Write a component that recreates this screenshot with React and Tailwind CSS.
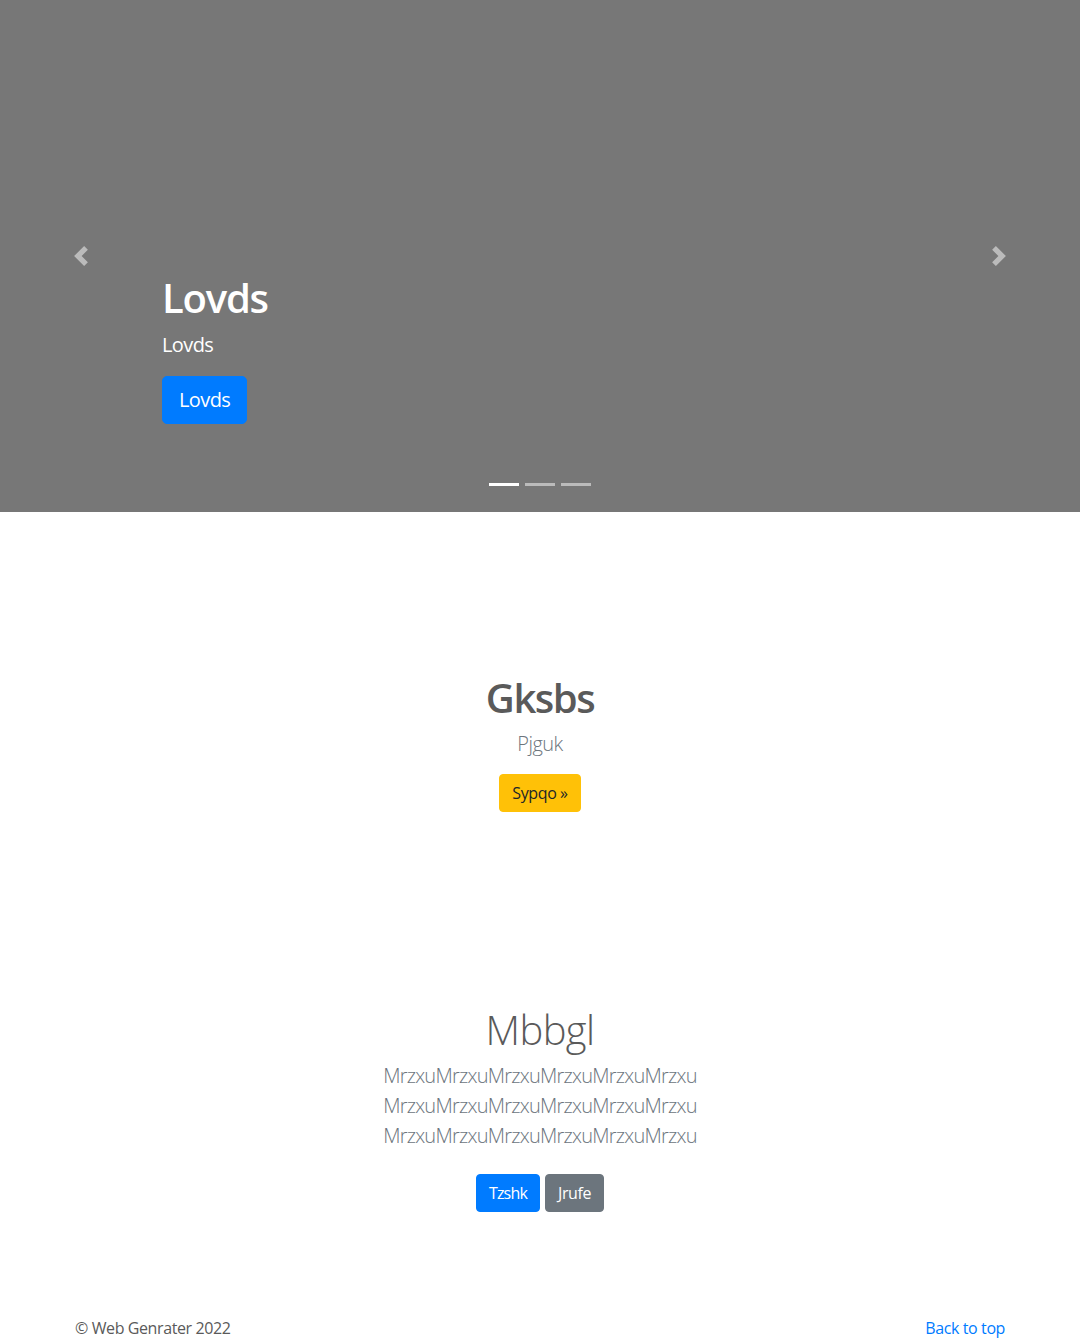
import React from 'react';

const Chevron = ({ dir }) => (
  <svg width="20" height="20" viewBox="0 0 8 8" className="opacity-50" fill="#fff">
    {dir === 'prev' ? (
      <path d="M5.25 0l-4 4 4 4 1.5-1.5L4.25 4l2.5-2.5L5.25 0z" />
    ) : (
      <path d="M2.75 0l-1.5 1.5L3.75 4l-2.5 2.5L2.75 8l4-4-4-4z" />
    )}
  </svg>
);

const Carousel = () => (
  <div className="relative h-[512px] bg-[#777] flex flex-col justify-end pl-[162px] pb-[88px]">
    {/* Стрелки */}
    <div className="absolute left-0 inset-y-0 w-[15%] flex items-center justify-center">
      <Chevron dir="prev" />
    </div>
    <div className="absolute right-0 inset-y-0 w-[15%] flex items-center justify-center">
      <Chevron dir="next" />
    </div>

    {/* Подпись слайда */}
    <h1 className="text-[40px] leading-[48px] font-semibold text-white mb-2 tracking-[-1.2px]">Lovds</h1>
    <p className="text-[20px] leading-[30px] text-white mb-4 tracking-[-0.6px]">Lovds</p>
    <div>
      <a className="inline-block bg-[#007bff] text-white text-[20px] leading-[30px] px-4 py-2 border border-[#007bff] rounded-[5px] tracking-[-0.6px]">
        Lovds
      </a>
    </div>

    {/* Индикаторы */}
    <div className="absolute bottom-[26px] left-0 right-0 flex justify-center gap-[6px]">
      <span className="w-[30px] h-[3px] bg-white" />
      <span className="w-[30px] h-[3px] bg-white/50" />
      <span className="w-[30px] h-[3px] bg-white/50" />
    </div>
  </div>
);

export default function App() {
  return (
    <div className="bg-white text-[#5a5a5a] font-['Open_Sans',sans-serif] text-base tracking-[-0.4px]">
      <Carousel />

      <section className="pt-[162px] flex flex-col items-center text-center">
        <h2 className="text-[40px] leading-[48px] font-semibold mb-[7px] tracking-[-1.5px]">Gksbs</h2>
        <p className="text-[20px] leading-[30px] font-light text-[#6c757d] mb-[15px] tracking-[-0.5px]">Pjguk</p>
        <a className="inline-block bg-[#ffc107] border border-[#ffc107] text-[#212529] text-base leading-6 px-3 py-[6px] rounded">
          Sypqo &raquo;
        </a>
      </section>

      <section className="pt-[194px] flex flex-col items-center text-center">
        <h2 className="text-[40px] leading-[48px] font-light mb-[7px] tracking-[-0.6px]">Mbbgl</h2>
        <p className="text-[20px] leading-[30px] font-light text-[#6c757d] mb-[23px] tracking-[-0.75px]">
          <span className="block">MrzxuMrzxuMrzxuMrzxuMrzxuMrzxu</span>
          <span className="block">MrzxuMrzxuMrzxuMrzxuMrzxuMrzxu</span>
          <span className="block">MrzxuMrzxuMrzxuMrzxuMrzxuMrzxu</span>
        </p>
        <div className="flex gap-[5px]">
          <a className="inline-block bg-[#007bff] border border-[#007bff] text-white text-base leading-6 px-3 py-[6px] rounded tracking-[-0.8px]">
            Tzshk
          </a>
          <a className="inline-block bg-[#6c757d] border border-[#6c757d] text-white text-base leading-6 px-3 py-[6px] rounded">
            Jrufe
          </a>
        </div>
      </section>

      <footer className="pt-[104px] pb-12 px-[75px] flex justify-between text-base leading-6">
        <p>© Web Genrater 2022</p>
        <a className="text-[#007bff]">Back to top</a>
      </footer>
    </div>
  );
}
